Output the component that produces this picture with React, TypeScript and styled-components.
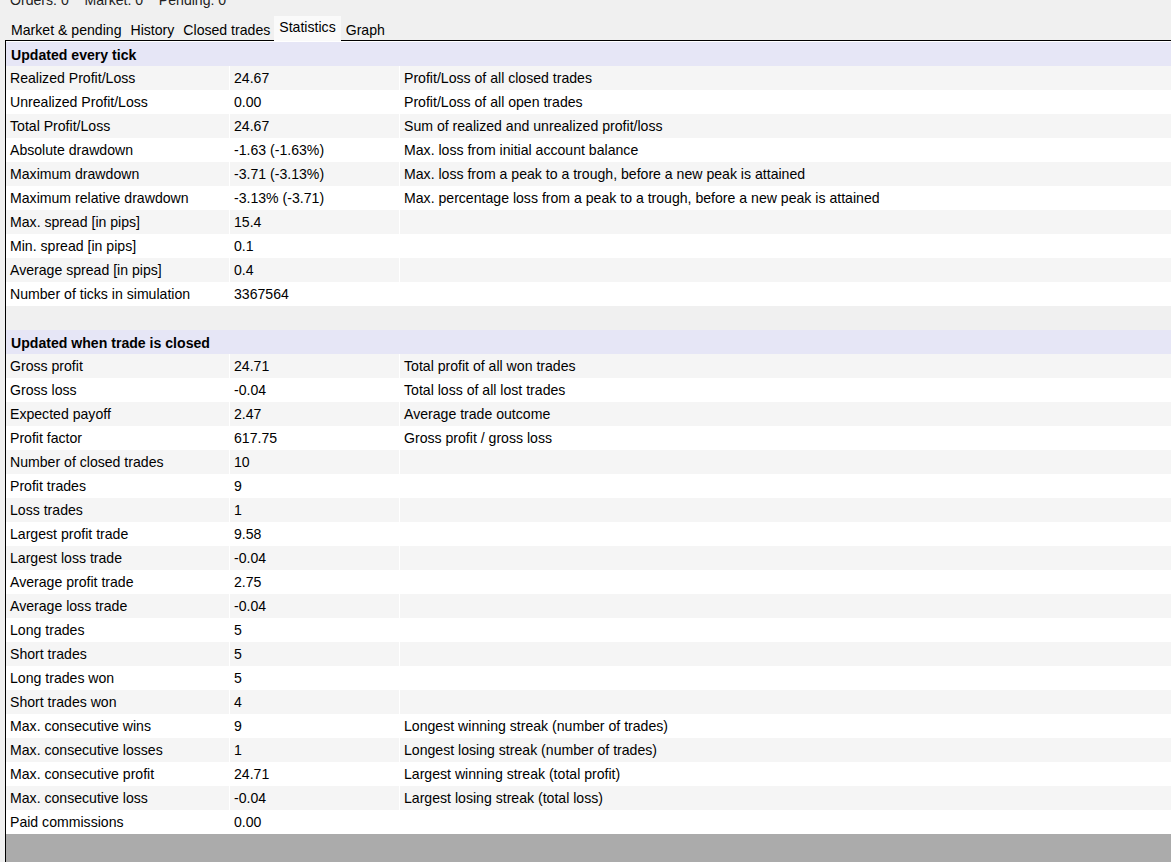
import styled, { createGlobalStyle } from "styled-components";

const Global = createGlobalStyle`
  body { margin: 0; background: #f0f0f0; font-family: "Liberation Sans", Arial, sans-serif; font-size: 14.1px; color: #000; }
`

const top = [
    ["Realized Profit/Loss", "24.67", "Profit/Loss of all closed trades"],
    ["Unrealized Profit/Loss", "0.00", "Profit/Loss of all open trades"],
    ["Total Profit/Loss", "24.67", "Sum of realized and unrealized profit/loss"],
    ["Absolute drawdown", "-1.63 (-1.63%)", "Max. loss from initial account balance"],
    ["Maximum drawdown", "-3.71 (-3.13%)", "Max. loss from a peak to a trough, before a new peak is attained"],
    ["Maximum relative drawdown", "-3.13% (-3.71)", "Max. percentage loss from a peak to a trough, before a new peak is attained"],
    ["Max. spread [in pips]", "15.4", ""],
    ["Min. spread [in pips]", "0.1", ""],
    ["Average spread [in pips]", "0.4", ""],
    ["Number of ticks in simulation", "3367564", ""],
]

const bottom = [
    ["Gross profit", "24.71", "Total profit of all won trades"],
    ["Gross loss", "-0.04", "Total loss of all lost trades"],
    ["Expected payoff", "2.47", "Average trade outcome"],
    ["Profit factor", "617.75", "Gross profit / gross loss"],
    ["Number of closed trades", "10", ""],
    ["Profit trades", "9", ""],
    ["Loss trades", "1", ""],
    ["Largest profit trade", "9.58", ""],
    ["Largest loss trade", "-0.04", ""],
    ["Average profit trade", "2.75", ""],
    ["Average loss trade", "-0.04", ""],
    ["Long trades", "5", ""],
    ["Short trades", "5", ""],
    ["Long trades won", "5", ""],
    ["Short trades won", "4", ""],
    ["Max. consecutive wins", "9", "Longest winning streak (number of trades)"],
    ["Max. consecutive losses", "1", "Longest losing streak (number of trades)"],
    ["Max. consecutive profit", "24.71", "Largest winning streak (total profit)"],
    ["Max. consecutive loss", "-0.04", "Largest losing streak (total loss)"],
    ["Paid commissions", "0.00", ""],
]

const tabs = ["Market & pending", "History", "Closed trades", "Statistics", "Graph"]

export default function App() {
    return (
        <Page>
            <Global/>
            <Summary>Orders: 0 &nbsp;&nbsp; Market: 0 &nbsp;&nbsp; Pending: 0</Summary>
            <Tabs>
                {tabs.map(t => <Tab key={t} $active={t === "Statistics"}>{t}</Tab>)}
            </Tabs>
            <Panel>
                <Header>Updated every tick</Header>
                {top.map((r, i) => <Row key={r[0]} $alt={i % 2 === 0}><Cell>{r[0]}</Cell><Cell>{r[1]}</Cell><Desc>{r[2]}</Desc></Row>)}
                <Blank/>
                <Header>Updated when trade is closed</Header>
                {bottom.map((r, i) => <Row key={r[0]} $alt={i % 2 === 0}><Cell>{r[0]}</Cell><Cell>{r[1]}</Cell><Desc>{r[2]}</Desc></Row>)}
                <Filler/>
            </Panel>
        </Page>
    );
}

const Page = styled.div`
  height: 862px;
  display: flex;
  flex-direction: column;
  overflow: hidden;
`
const Summary = styled.div`
  height: 14px;
  line-height: 0px;
  padding-left: 10px;
  overflow: hidden;
  color: #222;
`
const Tabs = styled.div`
  display: flex;
  align-items: flex-end;
  height: 26px;
  padding-left: 6px;
`
const Tab = styled.div<{ $active: boolean }>`
  padding: ${p => p.$active ? "3px 5px 6px" : "2px 4px 2px 5px"};
  background: ${p => p.$active ? "#fafafa" : "transparent"};
  margin-bottom: ${p => p.$active ? "-1px" : "0"};
  position: relative;
  z-index: 1;
`
const Panel = styled.div`
  flex: 1;
  margin-left: 5px;
  border-left: 1px solid #000;
  border-top: 1px solid #000;
  padding-top: 1px;
  background: #fff;
  display: flex;
  flex-direction: column;
`
const Header = styled.div`
  height: 24px;
  line-height: 26px;
  padding-left: 5px;
  font-weight: bold;
  background: #e6e6f6;
`
const Row = styled.div<{ $alt: boolean }>`
  height: 24px;
  display: grid;
  grid-template-columns: 224px 170px 1fr;
  background: ${p => p.$alt ? "#f5f5f5" : "#fff"};
`
const Cell = styled.div`
  padding-left: 4px;
  line-height: 24px;
  white-space: nowrap;
  border-right: 1px solid #fff;
`
const Desc = styled(Cell)`
  border-right: none;
`
const Blank = styled.div`
  height: 24px;
  background: #f0f0f0;
`
const Filler = styled.div`
  flex: 1;
  background: #ababab;
`
